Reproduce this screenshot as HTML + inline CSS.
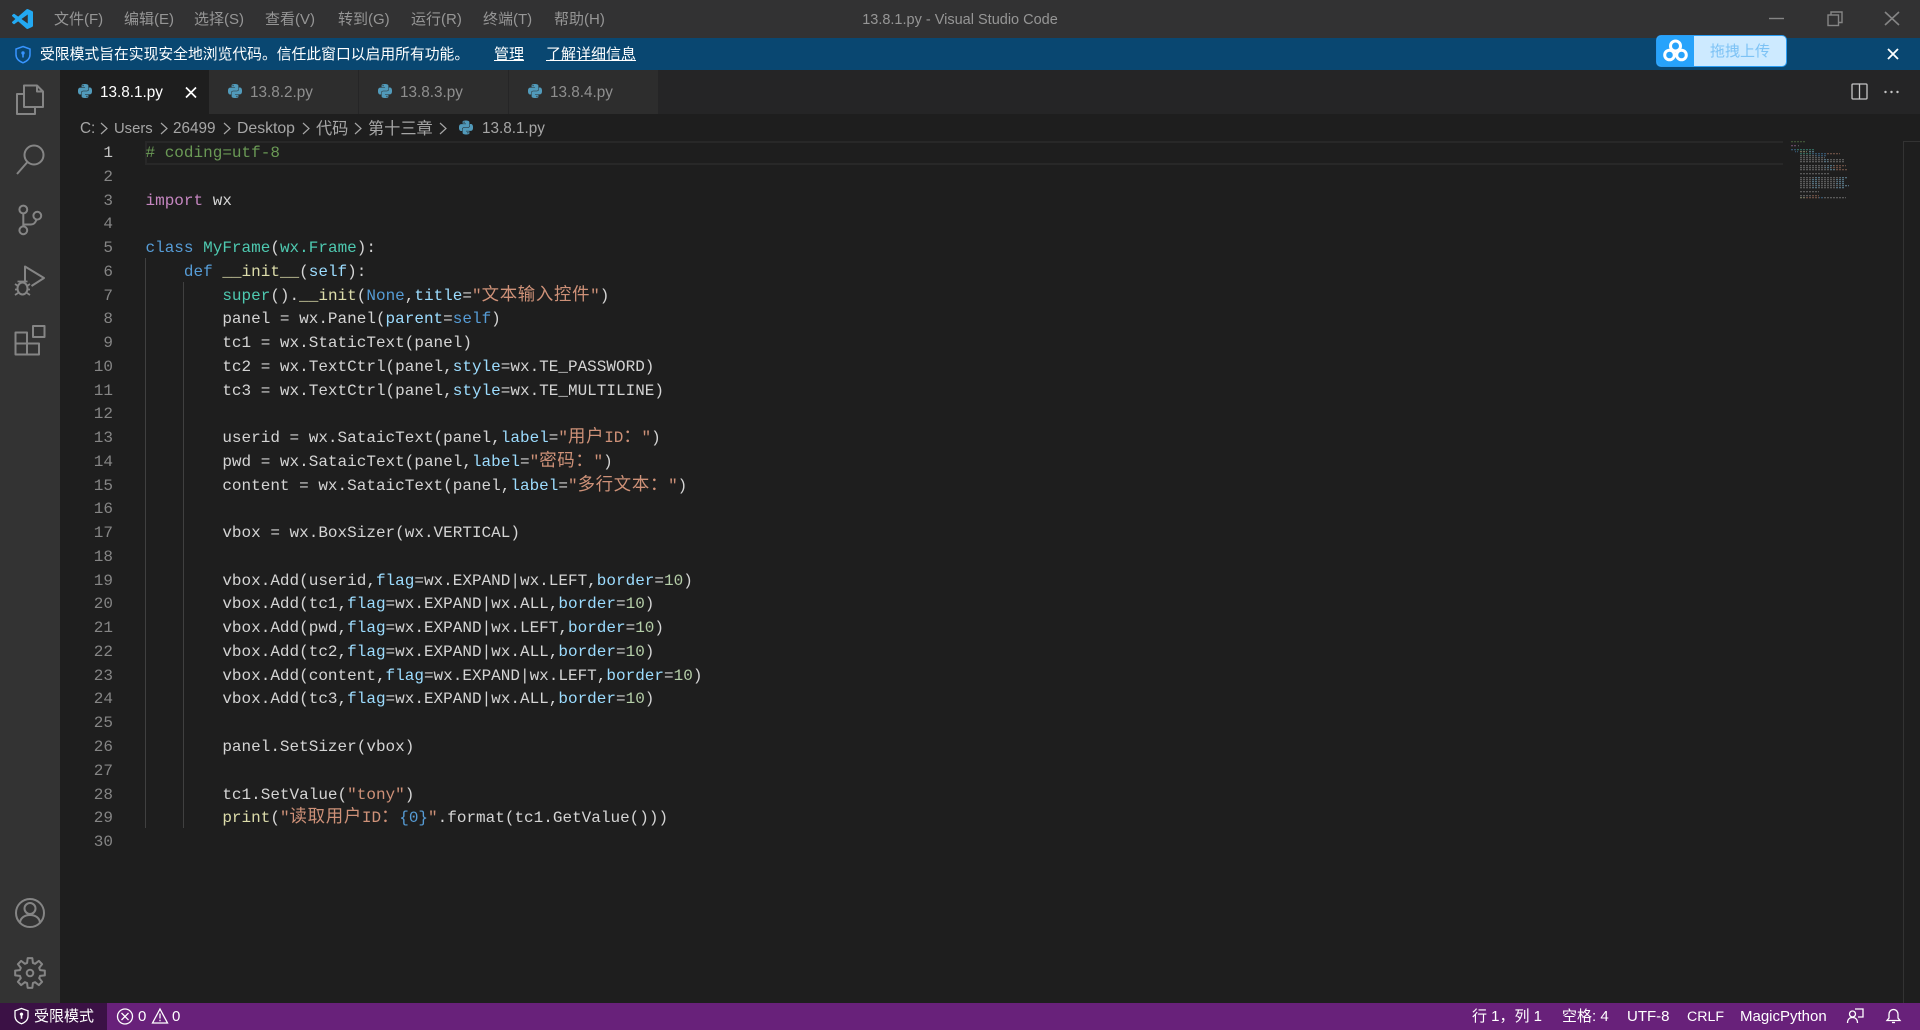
<!DOCTYPE html>
<html lang="zh">
<head>
<meta charset="utf-8">
<title>13.8.1.py - Visual Studio Code</title>
<style>
html,body{margin:0;padding:0;background:#1e1e1e;}
body{position:relative;width:1920px;height:1030px;overflow:hidden;font-family:"Liberation Sans","Noto Sans CJK SC",sans-serif;font-size:15px;color:#ccc;}
.a{position:absolute;white-space:pre;}
.bar{position:absolute;left:0;width:1920px;}
.m{position:absolute;top:7.5px;height:24px;line-height:24px;color:#969696;font-size:15px;white-space:pre;}
.tab{position:absolute;top:70px;height:44px;width:150px;background:#2d2d2d;border-right:1px solid #252526;box-sizing:border-box;}
.tt{position:absolute;top:82px;height:22px;line-height:22px;font-size:15.3px;color:#8f8f8f;white-space:pre;}
.bc{position:absolute;top:118px;height:22px;line-height:22px;font-size:15.3px;color:#a6a6a6;white-space:pre;}
.s{position:absolute;top:1005px;height:24px;line-height:24px;font-size:15px;color:#fff;white-space:pre;}
.ln{position:absolute;left:60px;width:53px;text-align:right;height:24px;line-height:24px;font-family:"Liberation Mono",monospace;font-size:16px;color:#858585;}
.l{position:absolute;left:145.5px;height:24px;line-height:24px;font-family:"Liberation Mono","Noto Sans CJK SC",monospace;font-size:16px;color:#d4d4d4;white-space:pre;}
.c{font-family:"Noto Sans CJK SC",sans-serif;font-size:17.4px;line-height:0;letter-spacing:.7px;}
.g{color:#6a9955}.k{color:#569cd6}.p{color:#c586c0}.t{color:#4ec9b0}.f{color:#dcdcaa}.v{color:#9cdcfe}.r{color:#ce9178}.n{color:#b5cea8}
svg{position:absolute;}
</style>
</head>
<body>
<!-- backgrounds -->
<div class="bar" style="top:0;height:38px;background:#323233;"></div>
<div class="bar" style="top:38px;height:32px;background:#094771;"></div>
<div class="a" style="left:0;top:70px;width:60px;height:933px;background:#333333;"></div>
<div class="a" style="left:60px;top:70px;width:1860px;height:44px;background:#252526;"></div>
<div class="a" style="left:60px;top:70px;width:149px;height:44px;background:#1e1e1e;"></div>
<div class="tab" style="left:209px;"></div>
<div class="tab" style="left:359px;"></div>
<div class="tab" style="left:509px;"></div>
<div class="bar" style="top:1003px;height:27px;background:#68217a;"></div>
<div class="a" style="left:0;top:1003px;width:107px;height:27px;background:#3b1145;"></div>

<!-- title bar -->
<div class="m" style="left:54px;">文件(F)</div>
<div class="m" style="left:124px;">编辑(E)</div>
<div class="m" style="left:194px;">选择(S)</div>
<div class="m" style="left:265px;">查看(V)</div>
<div class="m" style="left:338px;">转到(G)</div>
<div class="m" style="left:411px;">运行(R)</div>
<div class="m" style="left:483px;">终端(T)</div>
<div class="m" style="left:554px;">帮助(H)</div>
<div class="m" style="left:760px;width:400px;text-align:center;font-size:14.5px;">13.8.1.py - Visual Studio Code</div>

<!-- banner -->
<div class="a" style="left:40px;top:43px;height:24px;line-height:24px;color:#fff;font-size:14.8px;">受限模式旨在实现安全地浏览代码。信任此窗口以启用所有功能。</div>
<div class="a" style="left:494px;top:43px;height:24px;line-height:24px;color:#fff;font-size:15px;text-decoration:underline;">管理</div>
<div class="a" style="left:546px;top:43px;height:24px;line-height:24px;color:#fff;font-size:15px;text-decoration:underline;">了解详细信息</div>

<!-- upload widget -->
<div class="a" style="left:1656px;top:35px;width:131px;height:32px;box-sizing:border-box;border:1px solid #2a9df4;border-radius:5px;background:#cdeaff;overflow:hidden;">
  <div class="a" style="left:0;top:0;width:37px;height:30px;background:#27a3fb;"></div>
  <div class="a" style="left:53px;top:5px;height:22px;line-height:22px;font-size:15px;color:#7cc2f5;">拖拽上传</div>
</div>

<!-- tabs -->
<div class="tt" style="left:100px;color:#fff;">13.8.1.py</div>
<div class="tt" style="left:250px;">13.8.2.py</div>
<div class="tt" style="left:400px;">13.8.3.py</div>
<div class="tt" style="left:550px;">13.8.4.py</div>

<!-- breadcrumb -->
<div class="bc" style="left:80px;">C:</div>
<div class="bc" style="left:114px;font-size:14.8px;">Users</div>
<div class="bc" style="left:173px;">26499</div>
<div class="bc" style="left:237px;font-size:15.8px;">Desktop</div>
<div class="bc" style="left:316px;font-size:16.2px;">代码</div>
<div class="bc" style="left:368px;font-size:16.2px;">第十三章</div>
<div class="bc" style="left:482px;">13.8.1.py</div>

<!-- editor decorations -->
<div class="a" style="left:145px;top:141px;width:1638px;height:24px;box-sizing:border-box;border:2px solid #282828;border-right:0;"></div>
<div class="a" style="left:145px;top:258px;width:1px;height:570px;background:#404040;"></div>
<div class="a" style="left:183px;top:282px;width:1px;height:546px;background:#404040;"></div>
<div class="a" style="left:1903px;top:141px;width:1px;height:862px;background:#333;"></div>
<div class="a" style="left:1903px;top:141px;width:17px;height:1px;background:#333;"></div>

<!-- line numbers -->
<div class="ln" style="top:141px;color:#c6c6c6;">1</div>
<div class="ln" style="top:164.76px;">2</div>
<div class="ln" style="top:188.52px;">3</div>
<div class="ln" style="top:212.28px;">4</div>
<div class="ln" style="top:236.04px;">5</div>
<div class="ln" style="top:259.8px;">6</div>
<div class="ln" style="top:283.56px;">7</div>
<div class="ln" style="top:307.32px;">8</div>
<div class="ln" style="top:331.08px;">9</div>
<div class="ln" style="top:354.84px;">10</div>
<div class="ln" style="top:378.6px;">11</div>
<div class="ln" style="top:402.36px;">12</div>
<div class="ln" style="top:426.12px;">13</div>
<div class="ln" style="top:449.88px;">14</div>
<div class="ln" style="top:473.64px;">15</div>
<div class="ln" style="top:497.4px;">16</div>
<div class="ln" style="top:521.16px;">17</div>
<div class="ln" style="top:544.92px;">18</div>
<div class="ln" style="top:568.68px;">19</div>
<div class="ln" style="top:592.44px;">20</div>
<div class="ln" style="top:616.2px;">21</div>
<div class="ln" style="top:639.96px;">22</div>
<div class="ln" style="top:663.72px;">23</div>
<div class="ln" style="top:687.48px;">24</div>
<div class="ln" style="top:711.24px;">25</div>
<div class="ln" style="top:735px;">26</div>
<div class="ln" style="top:758.76px;">27</div>
<div class="ln" style="top:782.52px;">28</div>
<div class="ln" style="top:806.28px;">29</div>
<div class="ln" style="top:830.04px;">30</div>

<!-- code -->
<div class="l" style="top:141px;"><span class="g"># coding=utf-8</span></div>
<div class="l" style="top:188.52px;"><span class="p">import</span> wx</div>
<div class="l" style="top:236.04px;"><span class="k">class</span> <span class="t">MyFrame</span>(<span class="t">wx.Frame</span>):</div>
<div class="l" style="top:259.8px;">    <span class="k">def</span> <span class="f">__init__</span>(<span class="v">self</span>):</div>
<div class="l" style="top:283.56px;">        <span class="t">super</span>().<span class="f">__init</span>(<span class="k">None</span>,<span class="v">title</span>=<span class="r">"<span class="c">文本输入控件</span>"</span>)</div>
<div class="l" style="top:307.32px;">        panel = wx.Panel(<span class="v">parent</span>=<span class="k">self</span>)</div>
<div class="l" style="top:331.08px;">        tc1 = wx.StaticText(panel)</div>
<div class="l" style="top:354.84px;">        tc2 = wx.TextCtrl(panel,<span class="v">style</span>=wx.TE_PASSWORD)</div>
<div class="l" style="top:378.6px;">        tc3 = wx.TextCtrl(panel,<span class="v">style</span>=wx.TE_MULTILINE)</div>
<div class="l" style="top:426.12px;">        userid = wx.SataicText(panel,<span class="v">label</span>=<span class="r">"<span class="c">用户</span>ID<span class="c">：</span>"</span>)</div>
<div class="l" style="top:449.88px;">        pwd = wx.SataicText(panel,<span class="v">label</span>=<span class="r">"<span class="c">密码：</span>"</span>)</div>
<div class="l" style="top:473.64px;">        content = wx.SataicText(panel,<span class="v">label</span>=<span class="r">"<span class="c">多行文本：</span>"</span>)</div>
<div class="l" style="top:521.16px;">        vbox = wx.BoxSizer(wx.VERTICAL)</div>
<div class="l" style="top:568.68px;">        vbox.Add(userid,<span class="v">flag</span>=wx.EXPAND|wx.LEFT,<span class="v">border</span>=<span class="n">10</span>)</div>
<div class="l" style="top:592.44px;">        vbox.Add(tc1,<span class="v">flag</span>=wx.EXPAND|wx.ALL,<span class="v">border</span>=<span class="n">10</span>)</div>
<div class="l" style="top:616.2px;">        vbox.Add(pwd,<span class="v">flag</span>=wx.EXPAND|wx.LEFT,<span class="v">border</span>=<span class="n">10</span>)</div>
<div class="l" style="top:639.96px;">        vbox.Add(tc2,<span class="v">flag</span>=wx.EXPAND|wx.ALL,<span class="v">border</span>=<span class="n">10</span>)</div>
<div class="l" style="top:663.72px;">        vbox.Add(content,<span class="v">flag</span>=wx.EXPAND|wx.LEFT,<span class="v">border</span>=<span class="n">10</span>)</div>
<div class="l" style="top:687.48px;">        vbox.Add(tc3,<span class="v">flag</span>=wx.EXPAND|wx.ALL,<span class="v">border</span>=<span class="n">10</span>)</div>
<div class="l" style="top:735px;">        panel.SetSizer(vbox)</div>
<div class="l" style="top:782.52px;">        tc1.SetValue(<span class="r">"tony"</span>)</div>
<div class="l" style="top:806.28px;">        <span class="f">print</span>(<span class="r">"<span class="c">读取用户</span>ID<span class="c">：</span><span class="k">{0}</span>"</span>.format(tc1.GetValue()))</div>

<!-- status bar text -->
<div class="s" style="left:34px;">受限模式</div>
<div class="s" style="left:138px;">0</div>
<div class="s" style="left:172px;">0</div>
<div class="s" style="left:1472px;">行 1，列 1</div>
<div class="s" style="left:1562px;">空格: 4</div>
<div class="s" style="left:1627px;">UTF-8</div>
<div class="s" style="left:1687px;font-size:14.2px;">CRLF</div>
<div class="s" style="left:1740px;">MagicPython</div>

<!-- icon overlay in page coordinates -->
<svg width="1920" height="1030" viewBox="0 0 1920 1030" style="left:0;top:0;pointer-events:none;">
  <defs>
    <symbol id="py" viewBox="0 0 24 24"><path fill="#519aba" d="M14.25.18l.9.2.73.26.59.3.45.32.34.34.25.34.16.33.1.3.04.26.02.2-.01.13V8.5l-.05.63-.13.55-.21.46-.26.38-.3.31-.33.25-.35.19-.35.14-.33.1-.3.07-.26.04-.21.02H8.77l-.69.05-.59.14-.5.22-.41.27-.33.32-.27.35-.2.36-.15.37-.1.35-.07.32-.04.27-.02.21v3.06H3.17l-.21-.03-.28-.07-.32-.12-.35-.18-.36-.26-.36-.36-.35-.46-.32-.59-.28-.73-.21-.88-.14-1.05-.05-1.23.06-1.22.16-1.04.24-.87.32-.71.36-.57.4-.44.42-.33.42-.24.4-.16.36-.1.32-.05.24-.01h.16l.06.01h8.16v-.83H6.18l-.01-2.75-.02-.37.05-.34.11-.31.17-.28.25-.26.31-.23.38-.2.44-.18.51-.15.58-.12.64-.1.71-.06.77-.04.84-.02 1.27.05zm-6.3 1.98l-.23.33-.08.41.08.41.23.34.33.22.41.09.41-.09.33-.22.23-.34.08-.41-.08-.41-.23-.33-.33-.22-.41-.09-.41.09zm13.09 3.95l.28.06.32.12.35.18.36.27.36.35.35.47.32.59.28.73.21.88.14 1.04.05 1.23-.06 1.23-.16 1.04-.24.86-.32.71-.36.57-.4.45-.42.33-.42.24-.4.16-.36.09-.32.05-.24.02-.16-.01h-8.22v.82h5.84l.01 2.76.02.36-.05.34-.11.31-.17.29-.25.25-.31.24-.38.2-.44.17-.51.15-.58.13-.64.09-.71.07-.77.04-.84.01-1.27-.04-1.07-.14-.9-.2-.73-.25-.59-.3-.45-.33-.34-.34-.25-.34-.16-.33-.1-.3-.04-.25-.02-.2.01-.13v-5.34l.05-.64.13-.54.21-.46.26-.38.3-.32.33-.24.35-.2.35-.14.33-.1.3-.06.26-.04.21-.02.13-.01h5.84l.69-.05.59-.14.5-.21.41-.28.33-.32.27-.35.2-.36.15-.36.1-.35.07-.32.04-.28.02-.21V6.07h2.09l.14.01zm-6.47 14.25l-.23.33-.08.41.08.41.23.33.33.23.41.08.41-.08.33-.23.23-.33.08-.41-.08-.41-.23-.33-.33-.23-.41-.08-.41.08z"/></symbol>
    <pattern id="mm" width="3" height="2" patternUnits="userSpaceOnUse"><rect width="3" height=".7" fill="#1e1e1e"/><rect x="2" width="1" height="2" fill="#1e1e1e"/></pattern>
  </defs>

  <!-- VS Code logo -->
  <svg x="12" y="9" width="21" height="20" viewBox="0 0 24 24" preserveAspectRatio="none"><path fill="#23a9f2" d="M23.15 2.587L18.21.21a1.494 1.494 0 0 0-1.705.29l-9.46 8.63-4.12-3.128a.999.999 0 0 0-1.276.057L.327 7.261A1 1 0 0 0 .326 8.74L3.899 12 .326 15.26a1 1 0 0 0 .001 1.479L1.65 17.94a.999.999 0 0 0 1.276.057l4.12-3.128 9.46 8.63a1.492 1.492 0 0 0 1.704.29l4.942-2.377A1.5 1.5 0 0 0 24 20.06V3.939a1.5 1.5 0 0 0-.85-1.352zm-5.146 14.861L10.826 12l7.178-5.448v10.896z"/></svg>

  <!-- window controls -->
  <g fill="none" stroke="#858585" stroke-width="1.4">
    <path d="M1769 18.5h15"/>
    <rect x="1828" y="15" width="10.5" height="10.5"/>
    <path d="M1831 15v-3h11v10.5h-3.5"/>
    <path d="M1885 12l14 13M1899 12l-14 13" stroke-width="1.6"/>
  </g>

  <!-- banner shield and close -->
  <path d="M23 46.5l7 2.5v5.5c0 4-3 6.8-7 8.3-4-1.5-7-4.300-7-8.300V49z" fill="none" stroke="#3794ff" stroke-width="1.5"/>
  <circle cx="23" cy="53" r="1.700" fill="#3794ff"/><rect x="22.200" y="53.500" width="1.600" height="4" fill="#3794ff"/>
  <path d="M1888 49l10 10M1898 49l-10 10" stroke="#fff" stroke-width="1.800" fill="none"/>

  <!-- upload cloud -->
  <g fill="none" stroke="#fff" stroke-width="3">
    <circle cx="1675.500" cy="46" r="5"/>
    <circle cx="1669.500" cy="55" r="4.800"/>
    <circle cx="1681.500" cy="55" r="4.800"/>
  </g>

  <!-- python icons -->
  <use href="#py" x="78" y="84" width="14" height="14"/>
  <use href="#py" x="228" y="84" width="14" height="14"/>
  <use href="#py" x="378" y="84" width="14" height="14"/>
  <use href="#py" x="528" y="84" width="14" height="14"/>
  <use href="#py" x="459" y="120.500" width="14" height="14"/>

  <!-- tab close -->
  <path d="M186 87.500l10 10M196 87.500l-10 10" stroke="#fff" stroke-width="1.700" fill="none"/>

  <!-- breadcrumb chevrons -->
  <g fill="none" stroke="#a6a6a6" stroke-width="1.200">
    <path d="M101 123l6 5.500-6 5.500"/>
    <path d="M161 123l6 5.500-6 5.500"/>
    <path d="M224 123l6 5.500-6 5.500"/>
    <path d="M303 123l6 5.500-6 5.500"/>
    <path d="M355 123l6 5.500-6 5.500"/>
    <path d="M440 123l6 5.500-6 5.500"/>
  </g>

  <!-- editor actions -->
  <rect x="1852" y="84" width="15" height="15" rx="1" fill="none" stroke="#c5c5c5" stroke-width="1.300"/>
  <path d="M1859.500 84v15" stroke="#c5c5c5" stroke-width="1.300"/>
  <g fill="#c5c5c5"><circle cx="1885.500" cy="92" r="1.200"/><circle cx="1891.500" cy="92" r="1.200"/><circle cx="1897.500" cy="92" r="1.200"/></g>

  <!-- activity bar -->
  <g fill="none" stroke="#858585" stroke-width="2" stroke-linejoin="round">
    <path d="M24 85.500h13l6 6v15.500h-19z"/><path d="M37 85.500v6h6"/>
    <path d="M24 94h-7v20h18v-7"/>
    <circle cx="34" cy="155" r="9.500"/><path d="M27 162.500l-10 11.500"/>
    <circle cx="23.300" cy="209.500" r="3.900"/><circle cx="23.300" cy="230.300" r="3.900"/><circle cx="37.300" cy="215.700" r="3.900"/>
    <path d="M23.300 213.500v13M24 224.500h7q4 0 5.500-5"/>
    <path d="M25 281v-14.500l19 11.500-12.500 8"/>
    <ellipse cx="22.500" cy="288.500" rx="5" ry="6"/>
    <path d="M15 284l3 2M30 284l-3 2M15 289.500h2.500M30 289.500h-2.500M15 295l3-2M30 295l-3-2M17.500 281.500h10" stroke-width="1.800"/>
    <path d="M15.500 332.500h11.500v22h-11.500zM15.500 343.500h23.500v11h-23.500zM27 343.500v11"/>
    <rect x="33" y="326" width="11.500" height="11"/>
    <circle cx="30" cy="913" r="14"/><circle cx="30" cy="908.500" r="5.500"/>
    <path d="M20 923.500c0-5.500 4.500-8.500 10-8.500s10 3 10 8.500"/>
    <polygon points="27.110,962.910 27.650,958.180 32.350,958.180 32.890,962.910 35.090,963.820 38.820,960.860 42.140,964.180 39.180,967.910 40.090,970.110 44.820,970.650 44.820,975.350 40.090,975.890 39.180,978.090 42.140,981.820 38.820,985.140 35.090,982.180 32.890,983.090 32.350,987.820 27.650,987.820 27.110,983.090 24.910,982.180 21.180,985.140 17.860,981.820 20.820,978.090 19.910,975.890 15.180,975.350 15.180,970.650 19.910,970.110 20.820,967.910 17.860,964.180 21.180,960.860 24.910,963.820" stroke-width="2"/>
    <circle cx="30" cy="973" r="3.300"/>
  </g>

  <!-- status bar icons -->
  <g fill="none" stroke="#fff" stroke-width="1.300">
    <path d="M21.500 1008.500l6.500 2.300v5.200c0 4-3 6.500-6.500 7.800-3.500-1.300-6.500-3.800-6.500-7.800v-5.200z"/>
    <circle cx="125" cy="1016.500" r="7.500"/><path d="M121.500 1013l7 7M128.500 1013l-7 7"/>
    <path d="M160 1009l7.500 14h-15z"/><path d="M160 1013.500v5M160 1019.800v1.500"/>
    <path d="M1855 1009h8v8h-5M1851 1012"/><circle cx="1852.500" cy="1014" r="3"/><path d="M1847.500 1023c0-3.500 2-5.500 5-5.500s5 2 5 5.500"/>
    <path d="M1893.500 1009.500c-3 0-4.500 2.500-4.500 5v3.500l-2 2.500h13l-2-2.500v-3.500c0-2.500-1.500-5-4.500-5z"/><path d="M1892 1022.500h3"/>
  </g>
  <path d="M21.500 1012.500a1.700 1.700 0 0 0-.8 3.200v3h1.600v-3a1.700 1.700 0 0 0-.8-3.200z" fill="#fff"/>

  <!-- minimap -->
  <g opacity=".42">
    <rect x="1791" y="141" width="14" height="2" fill="#6a9955"/>
    <rect x="1791" y="145" width="6" height="2" fill="#c586c0"/><rect x="1798" y="145" width="2" height="2" fill="#aaa"/>
    <rect x="1791" y="149" width="5" height="2" fill="#569cd6"/><rect x="1797" y="149" width="17" height="2" fill="#4ec9b0"/>
    <rect x="1795" y="151" width="3" height="2" fill="#569cd6"/><rect x="1799" y="151" width="8" height="2" fill="#dcdcaa"/><rect x="1808" y="151" width="6" height="2" fill="#9cdcfe"/>
    <rect x="1799" y="153" width="13" height="2" fill="#4ec9b0"/><rect x="1812" y="153" width="14" height="2" fill="#569cd6"/><rect x="1826" y="153" width="14" height="2" fill="#ce9178"/>
    <rect x="1799" y="155" width="17" height="2" fill="#aaa"/><rect x="1816" y="155" width="11" height="2" fill="#569cd6"/>
    <rect x="1799" y="157" width="26" height="2" fill="#aaa"/>
    <rect x="1799" y="159" width="24" height="2" fill="#aaa"/><rect x="1823" y="159" width="5" height="2" fill="#9cdcfe"/><rect x="1828" y="159" width="16" height="2" fill="#aaa"/>
    <rect x="1799" y="161" width="24" height="2" fill="#aaa"/><rect x="1823" y="161" width="5" height="2" fill="#9cdcfe"/><rect x="1828" y="161" width="17" height="2" fill="#aaa"/>
    <rect x="1799" y="165" width="29" height="2" fill="#aaa"/><rect x="1828" y="165" width="6" height="2" fill="#9cdcfe"/><rect x="1834" y="165" width="12" height="2" fill="#ce9178"/>
    <rect x="1799" y="167" width="26" height="2" fill="#aaa"/><rect x="1825" y="167" width="6" height="2" fill="#9cdcfe"/><rect x="1831" y="167" width="10" height="2" fill="#ce9178"/>
    <rect x="1799" y="169" width="30" height="2" fill="#aaa"/><rect x="1829" y="169" width="6" height="2" fill="#9cdcfe"/><rect x="1835" y="169" width="13" height="2" fill="#ce9178"/>
    <rect x="1799" y="173" width="31" height="2" fill="#aaa"/>
    <rect x="1799" y="177" width="16" height="2" fill="#aaa"/><rect x="1815" y="177" width="5" height="2" fill="#9cdcfe"/><rect x="1820" y="177" width="20" height="2" fill="#aaa"/><rect x="1840" y="177" width="7" height="2" fill="#9cdcfe"/>
    <rect x="1799" y="179" width="13" height="2" fill="#aaa"/><rect x="1812" y="179" width="5" height="2" fill="#9cdcfe"/><rect x="1817" y="179" width="19" height="2" fill="#aaa"/><rect x="1836" y="179" width="8" height="2" fill="#9cdcfe"/>
    <rect x="1799" y="181" width="13" height="2" fill="#aaa"/><rect x="1812" y="181" width="5" height="2" fill="#9cdcfe"/><rect x="1817" y="181" width="20" height="2" fill="#aaa"/><rect x="1837" y="181" width="8" height="2" fill="#9cdcfe"/>
    <rect x="1799" y="183" width="13" height="2" fill="#aaa"/><rect x="1812" y="183" width="5" height="2" fill="#9cdcfe"/><rect x="1817" y="183" width="19" height="2" fill="#aaa"/><rect x="1836" y="183" width="8" height="2" fill="#9cdcfe"/>
    <rect x="1799" y="185" width="17" height="2" fill="#aaa"/><rect x="1816" y="185" width="5" height="2" fill="#9cdcfe"/><rect x="1821" y="185" width="20" height="2" fill="#aaa"/><rect x="1841" y="185" width="8" height="2" fill="#9cdcfe"/>
    <rect x="1799" y="187" width="13" height="2" fill="#aaa"/><rect x="1812" y="187" width="5" height="2" fill="#9cdcfe"/><rect x="1817" y="187" width="19" height="2" fill="#aaa"/><rect x="1836" y="187" width="8" height="2" fill="#9cdcfe"/>
    <rect x="1799" y="191" width="20" height="2" fill="#aaa"/>
    <rect x="1799" y="195" width="13" height="2" fill="#aaa"/><rect x="1812" y="195" width="7" height="2" fill="#ce9178"/>
    <rect x="1799" y="197" width="6" height="2" fill="#dcdcaa"/><rect x="1805" y="197" width="14" height="2" fill="#ce9178"/><rect x="1819" y="197" width="4" height="2" fill="#569cd6"/><rect x="1823" y="197" width="23" height="2" fill="#aaa"/>
  </g>
  <rect x="1790" y="140" width="62" height="60" fill="url(#mm)"/>
</svg>
</body>
</html>
